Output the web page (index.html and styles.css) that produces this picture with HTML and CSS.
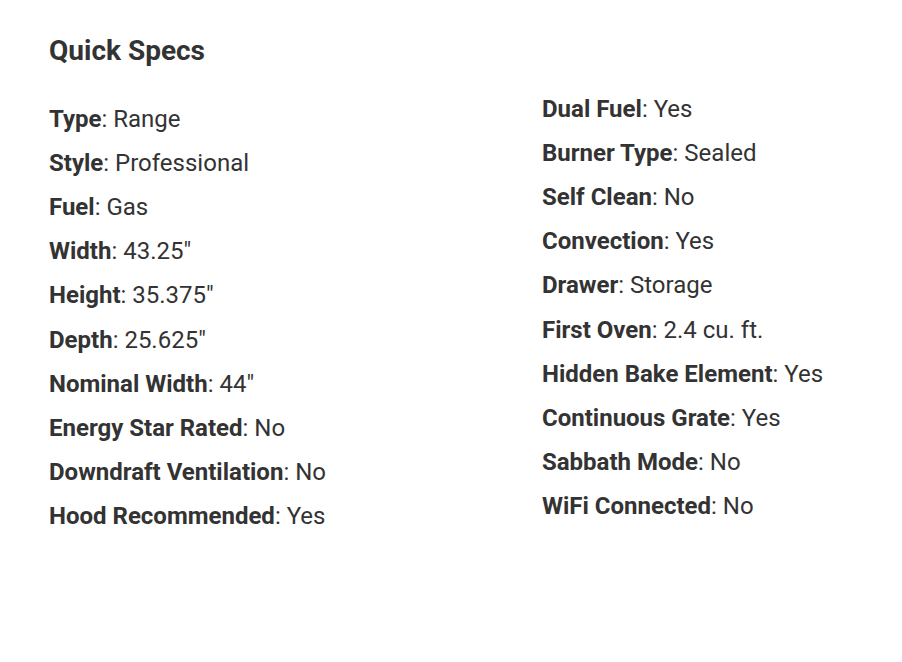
FILE: index.html
```html
<!DOCTYPE html>
<html>
<head>
<meta charset="utf-8">
<link rel="stylesheet" href="styles.css">
</head>
<body>
<div class="specs">
  <h2 class="title">Quick Specs</h2>
  <div class="cols">
    <ul class="list list-left">
      <li><b>Type</b>: Range</li>
      <li><b>Style</b>: Professional</li>
      <li><b>Fuel</b>: Gas</li>
      <li><b>Width</b>: 43.25"</li>
      <li><b>Height</b>: 35.375"</li>
      <li><b>Depth</b>: 25.625"</li>
      <li><b>Nominal Width</b>: 44"</li>
      <li><b>Energy Star Rated</b>: No</li>
      <li><b>Downdraft Ventilation</b>: No</li>
      <li><b>Hood Recommended</b>: Yes</li>
    </ul>
    <ul class="list list-right">
      <li><b>Dual Fuel</b>: Yes</li>
      <li><b>Burner Type</b>: Sealed</li>
      <li><b>Self Clean</b>: No</li>
      <li><b>Convection</b>: Yes</li>
      <li><b>Drawer</b>: Storage</li>
      <li><b>First Oven</b>: 2.4 cu. ft.</li>
      <li><b>Hidden Bake Element</b>: Yes</li>
      <li><b>Continuous Grate</b>: Yes</li>
      <li><b>Sabbath Mode</b>: No</li>
      <li><b>WiFi Connected</b>: No</li>
    </ul>
  </div>
</div>
</body>
</html>
```

FILE: styles.css
```css
html, body {
  margin: 0;
  padding: 0;
  background: #ffffff;
}
body {
  font-family: Roboto, "Liberation Sans", sans-serif;
  color: #333333;
}
.specs {
  padding: 35px 0 0 49px;
}
.title {
  margin: 0;
  font-size: 28px;
  line-height: 32px;
  font-weight: 700;
}
.cols {
  display: grid;
  grid-template-columns: 493px 1fr;
  margin-top: 19.5px;
}
.list {
  list-style: none;
  margin: 0;
  padding: 0;
}
.list li {
  font-size: 24px;
  line-height: 44.2px;
}
.list b {
  font-weight: 700;
}
.list-left {
  padding-top: 10px;
}
```
